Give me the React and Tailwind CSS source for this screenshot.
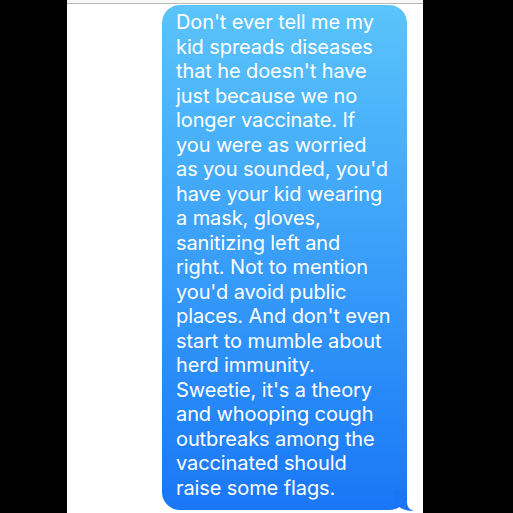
const lines = [
  "Don't ever tell me my",
  "kid spreads diseases",
  "that he doesn't have",
  "just because we no",
  "longer vaccinate. If",
  "you were as worried",
  "as you sounded, you'd",
  "have your kid wearing",
  "a mask, gloves,",
  "sanitizing left and",
  "right. Not to mention",
  "you'd avoid public",
  "places. And don't even",
  "start to mumble about",
  "herd immunity.",
  "Sweetie, it's a theory",
  "and whooping cough",
  "outbreaks among the",
  "vaccinated should",
  "raise some flags.",
];

function Tail() {
  return (
    <svg
      className="absolute right-[-7px] bottom-[-2px]"
      width="20"
      height="22"
      viewBox="0 0 20 22"
    >
      <path
        d="M13 0 L13 12 C13 17 16 20 20 21 C15 21.5 9 19.5 5 17 C3 18.5 1 19 0 19 L0 0 Z"
        fill="#1a76f6"
      />
    </svg>
  );
}

export default function App() {
  return (
    <div className="flex h-[513px] w-[513px] overflow-hidden bg-black">
      <div className="w-[67px] bg-black" />
      <div className="flex w-[356px] flex-col bg-white">
        <div className="h-[4px] border-b border-[#b9b9b9] bg-[#f7f7f7]" />
        <div className="ml-[95px] mt-[1px] w-[245px]">
          <div className="relative rounded-[18px] bg-gradient-to-b from-[#5bc4fa] to-[#1a76f6] px-[14px] pt-[5px] pb-[10px]">
            <div className="relative z-10 font-['Inter',sans-serif] text-[20px] leading-[24.5px] tracking-[-0.1px] text-white">
              {lines.map((l, i) => (
                <div key={i} className="whitespace-nowrap">
                  {l}
                </div>
              ))}
            </div>
            <Tail />
          </div>
        </div>
      </div>
      <div className="flex-1 bg-black" />
    </div>
  );
}
